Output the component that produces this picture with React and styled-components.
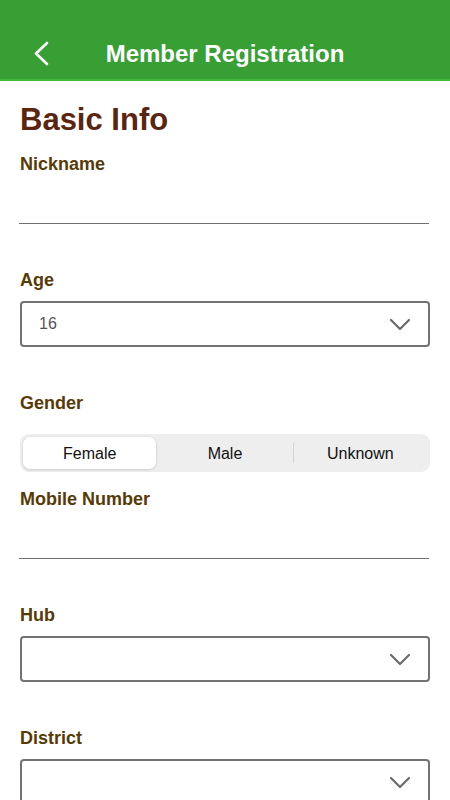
import styled, { createGlobalStyle } from "styled-components";

const GlobalStyle = createGlobalStyle`
  html, body {
    margin: 0;
    padding: 0;
    background: #ffffff;
    font-family: "Liberation Sans", Arial, Helvetica, sans-serif;
  }
  * {
    box-sizing: border-box;
  }
`;

function BackIcon() {
  return (
    <svg width="20" height="28" viewBox="0 0 20 28" fill="none">
      <polyline
        points="14,3 3,13.5 14,24"
        stroke="#ffffff"
        strokeWidth="2.6"
        strokeLinecap="round"
        strokeLinejoin="round"
      />
    </svg>
  );
}

function ChevronDown() {
  return (
    <svg width="22" height="13" viewBox="0 0 22 13" fill="none">
      <polyline
        points="2,2 11,11 20,2"
        stroke="#6b6b6b"
        strokeWidth="2.2"
        strokeLinecap="round"
        strokeLinejoin="round"
      />
    </svg>
  );
}

function SelectField({ label, value }) {
  return (
    <Field>
      <Label>{label}</Label>
      <SelectBox>
        <SelectValue>{value}</SelectValue>
        <ChevronDown />
      </SelectBox>
    </Field>
  );
}

const genders = ["Female", "Male", "Unknown"];

function App() {
  const selected = 0;
  return (
    <>
      <GlobalStyle />
      <Page>
        <Header>
          <Toolbar>
            <BackButton>
              <BackIcon />
            </BackButton>
            <Title>Member Registration</Title>
          </Toolbar>
        </Header>
        <Content>
          <SectionTitle>Basic Info</SectionTitle>
          <FirstField>
            <Label>Nickname</Label>
            <LineInput type="text" />
          </FirstField>
          <SelectField label="Age" value="16" />
          <Field>
            <Label>Gender</Label>
            <Segmented>
              {genders.map((g, i) => (
                <Segment
                  key={g}
                  $active={i === selected}
                  $divider={i > 0 && i !== selected && i - 1 !== selected}
                >
                  {g}
                </Segment>
              ))}
            </Segmented>
          </Field>
          <CompactField>
            <Label>Mobile Number</Label>
            <LineInput type="text" />
          </CompactField>
          <SelectField label="Hub" value="" />
          <SelectField label="District" value="" />
        </Content>
      </Page>
    </>
  );
}

const Page = styled.div`
  width: 450px;
  height: 800px;
  overflow: hidden;
  background: #ffffff;
`;

const Header = styled.header`
  background: #389f35;
  padding-top: 32px;
  padding-bottom: 3px;
  border-bottom: 2px solid #3fb83b;
`;

const Toolbar = styled.div`
  position: relative;
  height: 44px;
  display: flex;
  align-items: center;
  justify-content: center;
`;

const BackButton = styled.button`
  position: absolute;
  left: 33px;
  top: 8px;
  padding: 0;
  border: none;
  background: transparent;
  display: flex;
  cursor: pointer;
`;

const Title = styled.h1`
  margin: 0;
  color: #ffffff;
  font-size: 24px;
  line-height: 28px;
  font-weight: 700;
`;

const Content = styled.main`
  padding: 0 20px;
`;

const SectionTitle = styled.h2`
  margin: 21px 0 0;
  color: #5a2610;
  font-size: 31px;
  line-height: 36px;
  font-weight: 700;
`;

const Field = styled.div`
  margin-top: 45px;
  display: flex;
  flex-direction: column;
  gap: 10px;
`;

const FirstField = styled(Field)`
  margin-top: 15px;
  gap: 0;
`;

const CompactField = styled(Field)`
  margin-top: 16px;
  gap: 0;
`;

const Label = styled.label`
  color: #583a06;
  font-size: 18px;
  line-height: 22px;
  font-weight: 700;
`;

const LineInput = styled.input`
  display: block;
  width: 100%;
  height: 49px;
  margin-left: -1px;
  padding: 0 2px;
  border: none;
  border-bottom: 1.5px solid #6e6e6e;
  background: transparent;
  font-family: inherit;
  font-size: 16px;
  outline: none;
`;

const SelectBox = styled.div`
  height: 46px;
  border: 2px solid #727272;
  border-radius: 4px;
  display: flex;
  align-items: center;
  justify-content: space-between;
  padding: 0 17px;
`;

const SelectValue = styled.span`
  color: #555555;
  font-size: 16px;
`;

const Segmented = styled.div`
  margin-top: 10px;
  height: 38px;
  padding: 2px;
  background: #eeeeef;
  border-radius: 9px;
  display: flex;
`;

const Segment = styled.div`
  flex: 1;
  position: relative;
  display: flex;
  align-items: center;
  justify-content: center;
  padding-top: 1px;
  color: #111111;
  font-size: 16px;
  border-radius: 7px;
  margin: 1px;
  background: ${(p) => (p.$active ? "#ffffff" : "transparent")};
  box-shadow: ${(p) =>
    p.$active ? "0 1px 3px rgba(0, 0, 0, 0.12), 0 0 0 0.5px rgba(0, 0, 0, 0.04)" : "none"};

  &::before {
    content: "";
    display: ${(p) => (p.$divider ? "block" : "none")};
    position: absolute;
    left: -1px;
    top: 6px;
    bottom: 6px;
    width: 1px;
    background: #d3d3d3;
  }
`;

export default App;
